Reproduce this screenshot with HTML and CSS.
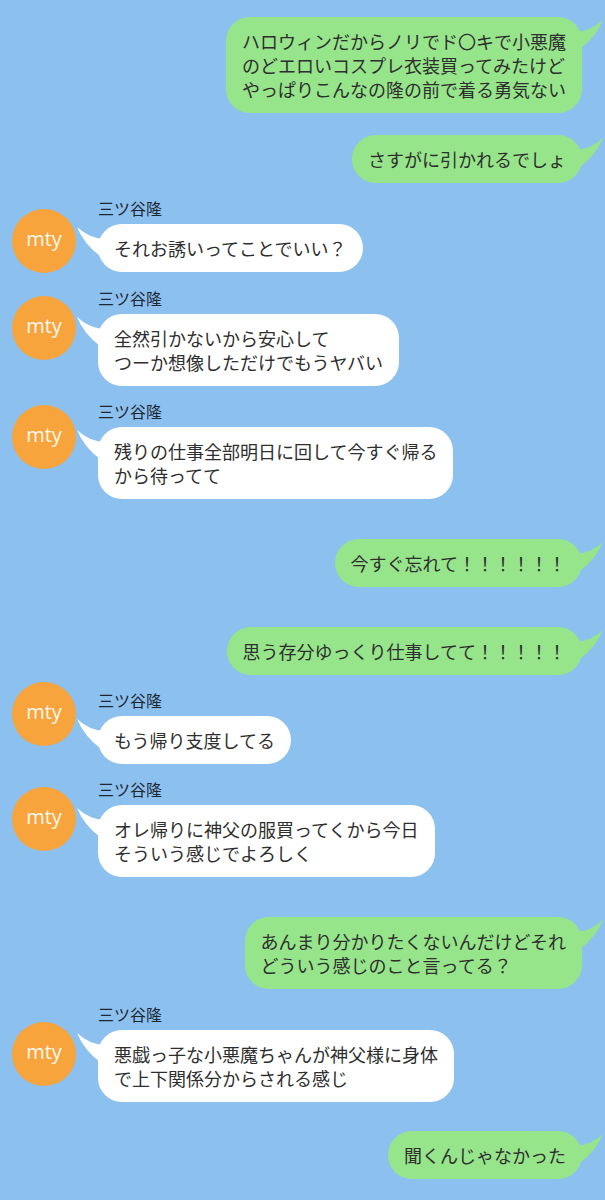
FILE: index.html
```html
<!DOCTYPE html>
<html lang="ja">
<head>
<meta charset="utf-8">
<title>トーク</title>
<link rel="stylesheet" href="styles.css">
</head>
<body>
<div class="chat">

  <div class="row sent">
    <div class="bubble green">ハロウィンだからノリでド〇キで小悪魔<br>のどエロいコスプレ衣装買ってみたけど<br>やっぱりこんなの隆の前で着る勇気ない<svg class="tail tail-r" viewBox="0 0 34 36" width="34" height="36"><path d="M6 15 Q21 14 33 3 Q26 20 10 32 Z"/></svg></div>
  </div>

  <div class="row sent gap-m">
    <div class="bubble green">さすがに引かれるでしょ<svg class="tail tail-r" viewBox="0 0 34 36" width="34" height="36"><path d="M6 15 Q21 14 33 3 Q26 20 10 32 Z"/></svg></div>
  </div>

  <div class="row recv gap-s">
    <div class="avatar av-12">mty</div>
    <div class="col">
      <div class="name">三ツ谷隆</div>
      <div class="bubble white">それお誘いってことでいい？<svg class="tail tail-l" viewBox="0 0 34 36" width="34" height="36"><path d="M28 15 Q13 14 1 3 Q8 20 24 32 Z"/></svg></div>
    </div>
  </div>

  <div class="row recv gap-s">
    <div class="avatar av-9">mty</div>
    <div class="col">
      <div class="name">三ツ谷隆</div>
      <div class="bubble white">全然引かないから安心して<br>つーか想像しただけでもうヤバい<svg class="tail tail-l" viewBox="0 0 34 36" width="34" height="36"><path d="M28 15 Q13 14 1 3 Q8 20 24 32 Z"/></svg></div>
    </div>
  </div>

  <div class="row recv gap-s">
    <div class="avatar av-5">mty</div>
    <div class="col">
      <div class="name">三ツ谷隆</div>
      <div class="bubble white">残りの仕事全部明日に回して今すぐ帰る<br>から待ってて<svg class="tail tail-l" viewBox="0 0 34 36" width="34" height="36"><path d="M28 15 Q13 14 1 3 Q8 20 24 32 Z"/></svg></div>
    </div>
  </div>

  <div class="row sent gap-l">
    <div class="bubble green">今すぐ忘れて！！！！！！<svg class="tail tail-r" viewBox="0 0 34 36" width="34" height="36"><path d="M6 15 Q21 14 33 3 Q26 20 10 32 Z"/></svg></div>
  </div>

  <div class="row sent gap-l">
    <div class="bubble green">思う存分ゆっくり仕事してて！！！！！<svg class="tail tail-r" viewBox="0 0 34 36" width="34" height="36"><path d="M6 15 Q21 14 33 3 Q26 20 10 32 Z"/></svg></div>
  </div>

  <div class="row recv gap-s">
    <div class="avatar av-n7">mty</div>
    <div class="col">
      <div class="name">三ツ谷隆</div>
      <div class="bubble white">もう帰り支度してる<svg class="tail tail-l" viewBox="0 0 34 36" width="34" height="36"><path d="M28 15 Q13 14 1 3 Q8 20 24 32 Z"/></svg></div>
    </div>
  </div>

  <div class="row recv gap-s">
    <div class="avatar av-9">mty</div>
    <div class="col">
      <div class="name">三ツ谷隆</div>
      <div class="bubble white">オレ帰りに神父の服買ってくから今日<br>そういう感じでよろしく<svg class="tail tail-l" viewBox="0 0 34 36" width="34" height="36"><path d="M28 15 Q13 14 1 3 Q8 20 24 32 Z"/></svg></div>
    </div>
  </div>

  <div class="row sent gap-l">
    <div class="bubble green">あんまり分かりたくないんだけどそれ<br>どういう感じのこと言ってる？<svg class="tail tail-r" viewBox="0 0 34 36" width="34" height="36"><path d="M6 15 Q21 14 33 3 Q26 20 10 32 Z"/></svg></div>
  </div>

  <div class="row recv gap-s">
    <div class="avatar av-19">mty</div>
    <div class="col">
      <div class="name">三ツ谷隆</div>
      <div class="bubble white">悪戯っ子な小悪魔ちゃんが神父様に身体<br>で上下関係分からされる感じ<svg class="tail tail-l" viewBox="0 0 34 36" width="34" height="36"><path d="M28 15 Q13 14 1 3 Q8 20 24 32 Z"/></svg></div>
    </div>
  </div>

  <div class="row sent gap-x">
    <div class="bubble green">聞くんじゃなかった<svg class="tail tail-r" viewBox="0 0 34 36" width="34" height="36"><path d="M6 15 Q21 14 33 3 Q26 20 10 32 Z"/></svg></div>
  </div>

</div>
</body>
</html>
```

FILE: styles.css
```css
html, body {
  margin: 0;
  padding: 0;
  background: #8cc0ee;
}

.chat {
  width: 605px;
  min-height: 1200px;
  box-sizing: border-box;
  padding: 17px 23px 0 12px;
  display: flex;
  flex-direction: column;
  font-family: "Noto Sans CJK JP", "Noto Sans", sans-serif;
  color: #2e2e2e;
}

.row {
  display: flex;
}

.sent {
  justify-content: flex-end;
}

.recv {
  align-items: flex-start;
}

.gap-s { margin-top: 14px; }
.gap-m { margin-top: 22px; }
.gap-l { margin-top: 40px; }
.gap-x { margin-top: 29px; }

.bubble {
  position: relative;
  padding: 12px 16px;
  font-size: 18px;
  line-height: 24px;
  border-radius: 24px;
  white-space: nowrap;
}

.green {
  background: #97e58b;
}

.green .tail path {
  fill: #97e58b;
}

.white {
  background: #ffffff;
}

.white .tail path {
  fill: #ffffff;
}

.tail {
  position: absolute;
  top: 0;
  display: block;
}

.tail-r {
  right: -22px;
}

.tail-l {
  left: -22px;
}

.avatar {
  width: 64px;
  height: 64px;
  flex: 0 0 64px;
  border-radius: 50%;
  background: #f8a43c;
  color: #fff8ee;
  font-family: "Open Sans", "Liberation Sans", sans-serif;
  font-size: 20px;
  line-height: 60px;
  text-align: center;
}

.av-12 { margin-top: 12px; }
.av-9 { margin-top: 9px; }
.av-5 { margin-top: 5px; }
.av-n7 { margin-top: -7px; }
.av-19 { margin-top: 19px; }

.col {
  display: flex;
  flex-direction: column;
  align-items: flex-start;
  margin-left: 22px;
}

.name {
  font-size: 16px;
  line-height: 22px;
  color: #1c2733;
  margin-bottom: 5px;
}
```
